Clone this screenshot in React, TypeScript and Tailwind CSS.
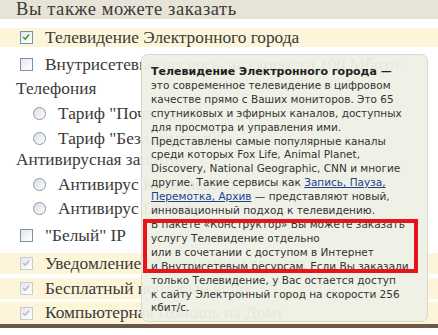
import React from 'react';

const serif = { fontFamily: '"Liberation Serif", "DejaVu Serif", serif' };

function Box({ state }: { state: 'on' | 'off' | 'dis' }) {
  const border = state === 'dis' ? 'border-[#c9ccd2]' : 'border-[#7f8fa6]';
  return (
    <span className={`relative inline-block w-[13px] h-[13px] border ${border} bg-gradient-to-br from-[#e4e7ec] to-white shrink-0`}>
      {state !== 'off' && (
        <svg viewBox="0 0 13 13" className="absolute left-0 top-0 w-[11px] h-[11px]">
          <path d="M2.5 6 L5 8.5 L9.5 3" fill="none" stroke={state === 'on' ? '#2e9c2e' : '#b7bbc2'} strokeWidth="1.8" />
        </svg>
      )}
    </span>
  );
}

function Radio() {
  return (
    <span className="inline-block w-[13px] h-[13px] rounded-full border border-[#8b97a8] bg-gradient-to-br from-[#d9dde3] to-white shrink-0" />
  );
}

export default function App() {
  return (
    <div className="relative w-[438px] h-[335px] overflow-hidden bg-white text-[#3a3a3a]" style={serif}>
      {/* список */}
      <div className="flex flex-col text-[17.3px]">
        <div className="h-[19px] bg-[#e7e3d6] pl-[16px] text-[18.5px] tracking-[0.6px] leading-[19px] whitespace-nowrap">Вы также можете заказать</div>
        <div className="mt-[9px] h-[19px] bg-[#fcf5d9] flex items-center gap-[12px] pl-[20px] whitespace-nowrap">
          <Box state="on" />Телевидение Электронного города
        </div>
        <div className="mt-[8px] h-[19px] flex items-center gap-[12px] pl-[20px] whitespace-nowrap">
          <Box state="off" />Внутрисетевые ресурсы на скорости 100 Мбит/с
        </div>
        <div className="mt-[5px] h-[19px] flex items-center pl-[16px] whitespace-nowrap">Телефония</div>
        <div className="mt-[6px] h-[19px] flex items-center gap-[12px] pl-[33px] whitespace-nowrap">
          <Radio />Тариф "Почасовой"
        </div>
        <div className="mt-[6px] h-[19px] flex items-center gap-[12px] pl-[33px] whitespace-nowrap">
          <Radio />Тариф "Безлимитный"
        </div>
        <div className="mt-[2px] h-[19px] flex items-center pl-[16px] whitespace-nowrap">Антивирусная защита</div>
        <div className="mt-[6px] h-[19px] flex items-center gap-[12px] pl-[33px] whitespace-nowrap">
          <Radio />Антивирус Касперского
        </div>
        <div className="mt-[5px] h-[19px] flex items-center gap-[12px] pl-[33px] whitespace-nowrap">
          <Radio />Антивирус Dr.Web
        </div>
        <div className="mt-[8px] h-[19px] flex items-center gap-[12px] pl-[20px] whitespace-nowrap">
          <Box state="off" />"Белый" IP
        </div>
        <div className="mt-[8px] h-[21px] bg-[#fcf5d9] flex items-center gap-[12px] pl-[20px] whitespace-nowrap">
          <Box state="dis" />Уведомление об окончании средств
        </div>
        <div className="mt-[4px] h-[21px] bg-[#fcf5d9] flex items-center gap-[12px] pl-[20px] whitespace-nowrap">
          <Box state="dis" />Бесплатный почтовый ящик
        </div>
        <div className="mt-[3px] h-[22px] bg-[#fcf5d9] flex items-center gap-[12px] pl-[20px] whitespace-nowrap">
          <Box state="dis" />Компьютерная Помощь на Дому
        </div>
        <div className="h-[4px] bg-[#6b5846]" />
      </div>

      {/* подсказка */}
      <div
        className="absolute left-[141px] top-[54px] w-[287px] h-[268px] rounded-[7px] border border-[#d6d9cc] bg-[#eef0e6]/95 pl-[9px] pt-[10px] text-[10.5px] leading-[13.9px] text-[#333] whitespace-nowrap"
        style={{ fontFamily: '"DejaVu Sans", Verdana, sans-serif' }}
      >
        <b className="text-[11px] text-[#222]">Телевидение Электронного города —</b><br />
        это современное телевидение в цифровом<br />
        качестве прямо с Ваших мониторов. Это 65<br />
        спутниковых и эфирных каналов, доступных<br />
        для просмотра и управления ими.<br />
        Представлены самые популярные каналы<br />
        среди которых Fox Life, Animal Planet,<br />
        Discovery, National Geographic, CNN и многие<br />
        другие. Такие сервисы как <a className="underline text-[#1d3f8f]">Запись, Пауза,</a><br />
        <a className="underline text-[#1d3f8f]">Перемотка, Архив</a> — представляют новый,<br />
        инновационный подход к телевидению.<br />
        В пакете «Конструктор» Вы можете заказать<br />
        услугу Телевидение отдельно<br />
        или в сочетании с доступом в Интернет<br />
        и Внутрисетевым ресурсам. Если Вы заказали<br />
        только Телевидение, у Вас остается доступ<br />
        к сайту Электронный город на скорости 256<br />
        кбит/с.
      </div>

      {/* красная рамка */}
      <div className="absolute left-[143px] top-[219px] w-[275px] h-[54px] border-[4px] border-[#e8141b]" />
    </div>
  );
}
